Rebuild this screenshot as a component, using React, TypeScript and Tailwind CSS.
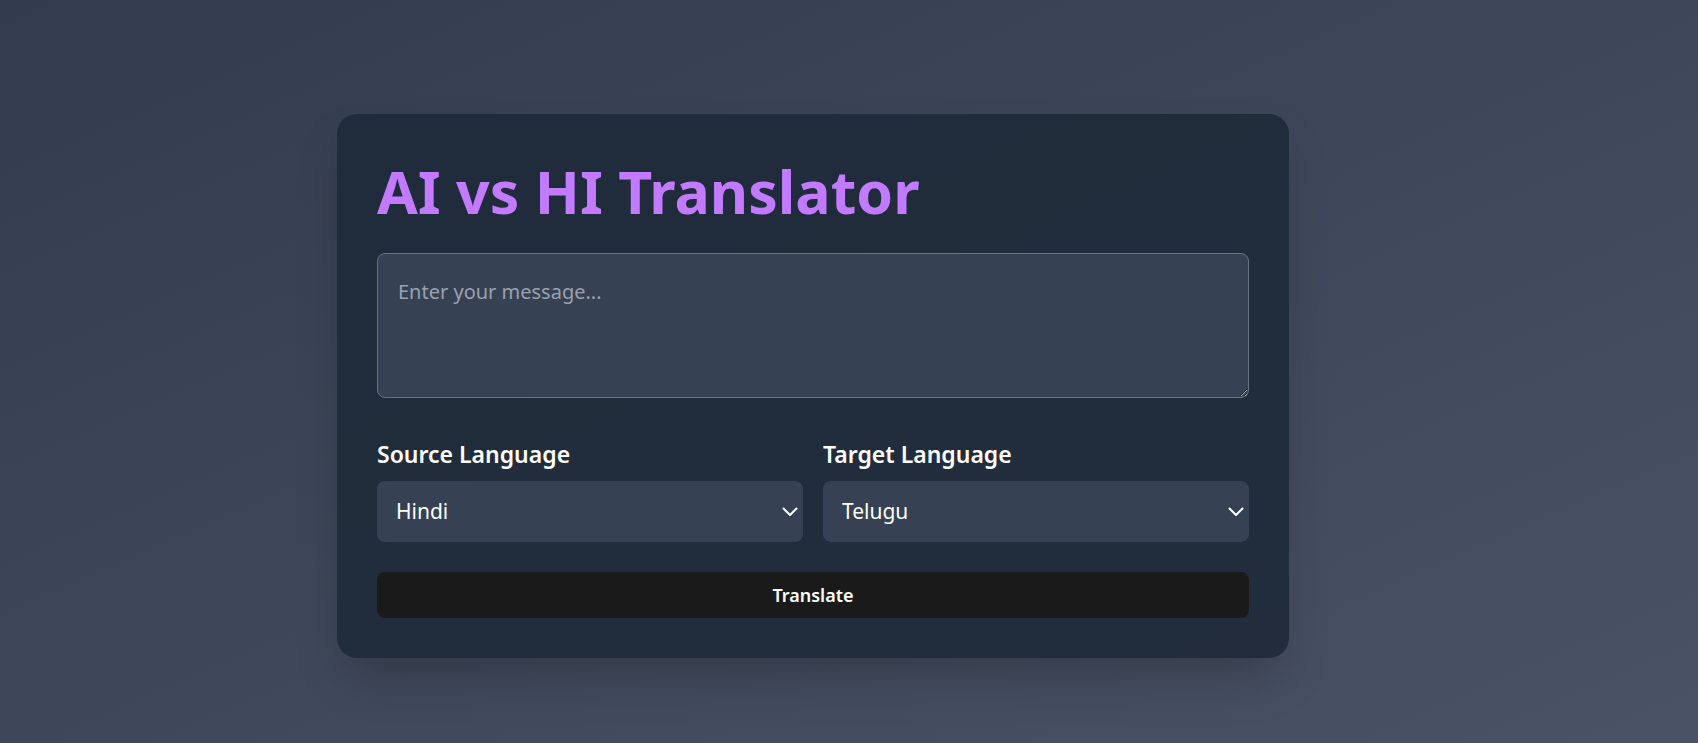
import React from "react";

function Chevron() {
  return (
    <svg
      width="16"
      height="10"
      viewBox="0 0 16 10"
      fill="none"
      className="pointer-events-none absolute right-[5px] top-1/2 -translate-y-1/2"
    >
      <path d="M1.5 1.5L8 8L14.5 1.5" stroke="white" strokeWidth="2" strokeLinecap="round" strokeLinejoin="round" />
    </svg>
  );
}

function LangSelect({ label, value, options }: { label: string; value: string; options: string[] }) {
  return (
    <div className="flex flex-col">
      <label className="mb-[12px] text-[23px] font-semibold leading-[30px] text-white">{label}</label>
      <div className="relative">
        <select
          defaultValue={value}
          className="h-[61px] w-full appearance-none rounded-lg bg-[#364153] px-[19px] text-[21px] text-white outline-none"
        >
          {options.map((o) => (
            <option key={o} value={o}>
              {o}
            </option>
          ))}
        </select>
        <Chevron />
      </div>
    </div>
  );
}

export default function App() {
  const langs = ["English", "Hindi", "Telugu", "Tamil", "Kannada", "Bengali"];
  return (
    <div
      className="min-h-screen w-full bg-gradient-to-br from-[#333c4e] to-[#4a5366] pl-[337px] pt-[114px]"
      style={{ fontFamily: '"Noto Sans", "Open Sans", sans-serif' }}
    >
      <div className="w-[952px] rounded-[20px] bg-[#1e2939]/90 p-10 shadow-2xl">
        <h1 className="mb-[25px] text-[59px] font-bold leading-[74px] text-[#c27aff]">AI vs HI Translator</h1>
        <textarea
          placeholder="Enter your message..."
          className="block h-[145px] w-full rounded-lg border border-[#6a7282] bg-[#364153] px-5 pb-[20px] pt-[24px] text-[20px] leading-[28px] text-white outline-none placeholder:text-[#99a1af]"
        />
        <div className="mt-[41px] grid grid-cols-2 gap-5">
          <LangSelect label="Source Language" value="Hindi" options={langs} />
          <LangSelect label="Target Language" value="Telugu" options={langs} />
        </div>
        <button className="mt-[30px] h-[46px] w-full rounded-lg bg-[#1a1a1a] text-[18px] font-semibold text-white">
          Translate
        </button>
      </div>
    </div>
  );
}
